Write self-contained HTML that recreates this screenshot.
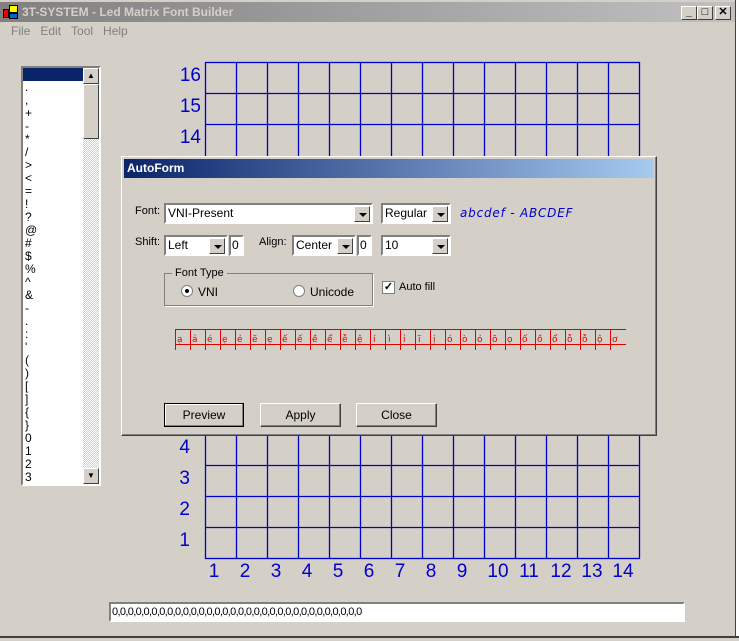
<!DOCTYPE html>
<html><head><meta charset="utf-8"><style>
*{box-sizing:border-box;margin:0;padding:0}
body{width:739px;height:641px;background:#d4d0c8;font-family:"Liberation Sans",sans-serif;font-size:11px;position:relative;overflow:hidden}
.a{position:absolute}
.title{left:0;top:2px;width:735px;height:20px;background:linear-gradient(90deg,#808080,#c0c0c0);color:#d4d0c8;font-weight:bold;font-size:12px;line-height:20px;padding-left:22px}
.wb{width:16px;height:14px;background:#d4d0c8;border:1px solid;border-color:#fff #404040 #404040 #fff;top:6px;font-size:11px;line-height:11px;text-align:center;color:#000;font-weight:bold}
.menu{top:24px;left:11px;color:#808080;font-size:12px}
.menu span{margin-right:10px}
.sunk{border:2px solid;border-color:#808080 #fff #fff #808080;background:#fff}
.btn{background:#d4d0c8;border:1px solid;border-color:#fff #404040 #404040 #fff;text-align:center;font-size:11px;line-height:20px}
.dd{background:#d4d0c8;border:1px solid;border-color:#fff #404040 #404040 #fff;width:16px;height:16px;position:absolute;right:1px;top:1px}
.dd:after{content:"";position:absolute;left:4px;top:6px;border:4px solid transparent;border-top:4px solid #000;border-bottom:0}
.cb{height:21px;font-size:12px;line-height:17px;padding-left:2px;color:#000}
</style></head><body>
<div class="a" style="left:735px;top:0;width:4px;height:641px;background:#fff;border-left:1px solid #404040"></div>
<div class="a" style="left:0;top:636px;width:739px;height:5px;background:#d4d0c8;border-top:2px solid #404040"></div>
<div class="a title">3T-SYSTEM - Led Matrix Font Builder</div>
<div class="a" style="left:3px;top:5px;width:16px;height:14px"><div class="a" style="left:0;top:4px;width:6px;height:9px;background:#e00;border:1px solid #000"></div><div class="a" style="left:6px;top:0;width:9px;height:8px;background:#ff0;border:1px solid #000"></div><div class="a" style="left:6px;top:8px;width:9px;height:6px;background:#06c;border:1px solid #000"></div></div>
<div class="a wb" style="left:681px">_</div><div class="a wb" style="left:697px">□</div><div class="a wb" style="left:715px">✕</div>
<div class="a menu"><span>File</span><span>Edit</span><span>Tool</span><span>Help</span></div>

<div class="a sunk" style="left:21px;top:66px;width:80px;height:420px"></div>
<div class="a" style="left:23px;top:68px;width:60px;height:13px;background:#0a246a"></div>
<div class="a" style="left:25px;top:81px;font-size:12px;line-height:13px;color:#000">.<br>,<br>+<br>-<br>*<br>/<br>&gt;<br>&lt;<br>=<br>!<br>?<br>@<br>#<br>$<br>%<br>^<br>&amp;<br>-<br>.<br>:<br>'<br>(<br>)<br>[<br>]<br>{<br>}<br>0<br>1<br>2<br>3</div>
<div class="a" style="left:83px;top:68px;width:16px;height:416px;background:repeating-conic-gradient(#fff 0 25%,#d4d0c8 0 50%) 0 0/2px 2px"></div>
<div class="a btn" style="left:83px;top:68px;width:16px;height:16px;font-size:8px;line-height:14px">▲</div>
<div class="a btn" style="left:83px;top:84px;width:16px;height:55px"></div>
<div class="a btn" style="left:83px;top:468px;width:16px;height:16px;font-size:8px;line-height:14px">▼</div>

<svg class="a" style="left:0;top:0" width="739" height="641">
<g stroke="#0000cc" stroke-width="1.3" fill="none">
<rect x="205.5" y="62.5" width="434" height="496"/>
<path d="M236.5 62V558M267.5 62V558M298.5 62V558M329.5 62V558M360.5 62V558M391.5 62V558M422.5 62V558M453.5 62V558M484.5 62V558M515.5 62V558M546.5 62V558M577.5 62V558M608.5 62V558M205 93.5H639M205 124.5H639M205 465.5H639M205 496.5H639M205 527.5H639"/>
</g>
<g fill="#0000cc" font-family="Liberation Sans" font-size="19" text-anchor="end">
<text x="201" y="81">16</text><text x="201" y="112">15</text><text x="201" y="143">14</text>
<text x="190" y="453">4</text><text x="190" y="484">3</text><text x="190" y="515">2</text><text x="190" y="546">1</text>
</g>
<g fill="#0000cc" font-family="Liberation Sans" font-size="19" text-anchor="middle">
<text x="214" y="577">1</text><text x="245" y="577">2</text><text x="276" y="577">3</text><text x="307" y="577">4</text><text x="338" y="577">5</text><text x="369" y="577">6</text><text x="400" y="577">7</text><text x="431" y="577">8</text><text x="462" y="577">9</text><text x="498" y="577">10</text><text x="529" y="577">11</text><text x="561" y="577">12</text><text x="592" y="577">13</text><text x="623" y="577">14</text>
</g>
</svg>

<div class="a" style="left:121px;top:156px;width:536px;height:280px;background:#d4d0c8;border:1px solid;border-color:#fff #404040 #404040 #fff;box-shadow:inset -1px -1px #808080"></div>
<div class="a" style="left:124px;top:159px;width:530px;height:19px;background:linear-gradient(90deg,#0a246a,#a6caf0);color:#fff;font-weight:bold;font-size:12px;line-height:19px;padding-left:3px">AutoForm</div>
<div class="a" style="left:135px;top:205px;font-size:11px">Font:</div>
<div class="a sunk cb" style="left:164px;top:203px;width:209px">VNI-Present<div class="dd"></div></div>
<div class="a sunk cb" style="left:381px;top:203px;width:70px">Regular<div class="dd"></div></div>
<div class="a" style="left:460px;top:206px;color:#0000cc;font-size:12px;font-style:italic;font-family:'DejaVu Sans',sans-serif;letter-spacing:0.8px">abcdef - ABCDEF</div>
<div class="a" style="left:135px;top:236px">Shift:</div>
<div class="a sunk cb" style="left:164px;top:235px;width:64px">Left<div class="dd"></div></div>
<div class="a sunk cb" style="left:229px;top:235px;width:15px;padding-left:1px">0</div>
<div class="a" style="left:259px;top:236px">Align:</div>
<div class="a sunk cb" style="left:292px;top:235px;width:64px">Center<div class="dd"></div></div>
<div class="a sunk cb" style="left:357px;top:235px;width:15px;padding-left:1px">0</div>
<div class="a sunk cb" style="left:381px;top:235px;width:70px">10<div class="dd"></div></div>
<div class="a" style="left:164px;top:273px;width:209px;height:33px;border:1px solid #808080;box-shadow:1px 1px #fff"></div>
<div class="a" style="left:172px;top:267px;background:#d4d0c8;padding:0 3px;font-size:11px">Font Type</div>
<div class="a" style="left:181px;top:285px;width:12px;height:12px;border-radius:50%;background:#fff;border:1px solid #808080"><div class="a" style="left:3px;top:3px;width:4px;height:4px;border-radius:50%;background:#000"></div></div>
<div class="a" style="left:198px;top:285px;font-size:12px">VNI</div>
<div class="a" style="left:293px;top:285px;width:12px;height:12px;border-radius:50%;background:#fff;border:1px solid #808080"></div>
<div class="a" style="left:310px;top:285px;font-size:12px">Unicode</div>
<div class="a" style="left:382px;top:281px;width:13px;height:13px;background:#fff;border:1px solid #808080;font-size:11px;line-height:11px;text-align:center;font-weight:bold">✓</div>
<div class="a" style="left:399px;top:281px;font-size:11px">Auto fill</div>
<svg class="a" style="left:0;top:0" width="739" height="641">
<g stroke="#e00000" stroke-width="1" fill="none">
<path d="M175 329.5H626M175 344.5H626"/>
<path d="M175.5 329V350M190.5 329V350M205.5 329V350M220.5 329V350M235.5 329V350M250.5 329V350M265.5 329V350M280.5 329V350M295.5 329V350M310.5 329V350M325.5 329V350M340.5 329V350M355.5 329V350M370.5 329V350M385.5 329V350M400.5 329V350M415.5 329V350M430.5 329V350M445.5 329V350M460.5 329V350M475.5 329V350M490.5 329V350M505.5 329V350M520.5 329V350M535.5 329V350M550.5 329V350M565.5 329V350M580.5 329V350M595.5 329V350M610.5 329V350"/>
</g>
<g fill="#e00000" font-size="9" font-family="DejaVu Sans">
<text x="177" y="342">ạ</text><text x="192" y="342">ả</text><text x="207" y="342">é</text><text x="222" y="342">ẹ</text><text x="237" y="342">ẻ</text><text x="252" y="342">ẽ</text><text x="267" y="342">ẹ</text><text x="282" y="342">ế</text><text x="297" y="342">ế</text><text x="312" y="342">ề</text><text x="327" y="342">ể</text><text x="342" y="342">ễ</text><text x="357" y="342">ệ</text><text x="373" y="342">í</text><text x="388" y="342">ì</text><text x="403" y="342">ỉ</text><text x="418" y="342">ĩ</text><text x="433" y="342">ị</text><text x="447" y="342">ó</text><text x="462" y="342">ò</text><text x="477" y="342">ỏ</text><text x="492" y="342">õ</text><text x="507" y="342">ọ</text><text x="522" y="342">ố</text><text x="537" y="342">ồ</text><text x="552" y="342">ổ</text><text x="567" y="342">ỗ</text><text x="582" y="342">ỗ</text><text x="597" y="342">ộ</text><text x="612" y="342">ơ</text>
</g>
</svg>
<div class="a btn" style="left:164px;top:403px;width:80px;height:24px;border:1px solid #000;box-shadow:inset -1px -1px #808080,inset 1px 1px #fff;line-height:22px;font-size:12px">Preview</div>
<div class="a btn" style="left:260px;top:403px;width:81px;height:24px;box-shadow:inset -1px -1px #808080;line-height:22px;font-size:12px">Apply</div>
<div class="a btn" style="left:356px;top:403px;width:81px;height:24px;box-shadow:inset -1px -1px #808080;line-height:22px;font-size:12px">Close</div>

<div class="a sunk" style="left:109px;top:602px;width:576px;height:20px;font-size:11px;line-height:16px;padding-left:1px;letter-spacing:-0.65px">0,0,0,0,0,0,0,0,0,0,0,0,0,0,0,0,0,0,0,0,0,0,0,0,0,0,0,0,0,0,0,0</div>
</body></html>
